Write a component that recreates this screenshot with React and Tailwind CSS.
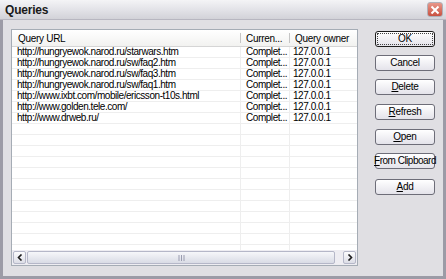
import React from 'react';

const rows = [
    'http://hungryewok.narod.ru/starwars.htm',
    'http://hungryewok.narod.ru/sw/faq2.htm',
    'http://hungryewok.narod.ru/sw/faq3.htm',
    'http://hungryewok.narod.ru/sw/faq1.htm',
    'http://www.ixbt.com/mobile/ericsson-t10s.html',
    'http://www.golden.tele.com/',
    'http://www.drweb.ru/',
];

const emptyRows = 12;

const Btn = ({ children, focus, className = '' }) => (
    <div
        className={`h-[16px] w-[60px] flex items-center justify-center rounded-[3px] border ${focus ? 'border-[#1c1c1c]' : 'border-[#6d6d78]'} bg-gradient-to-b from-white to-[#e4e3ea] text-[10px] tracking-[-0.3px] leading-none text-black whitespace-nowrap ${className}`}
    >
        {focus ? (
            <span className="w-[56px] h-[12px] flex items-center justify-center border border-dotted border-[#444]">{children}</span>
        ) : children}
    </div>
);

export default function App() {
    return (
        <div className="w-[446px] h-[279px] flex flex-col bg-[#e0dfe3] border-[3px] border-t-0 border-[#9c9ba6]" style={{ fontFamily: '"Liberation Sans", Arial, sans-serif' }}>
            {/* title bar */}
            <div className="h-[20px] flex items-center justify-between bg-gradient-to-b from-[#f4f4f6] via-[#e3e3e8] to-[#d2d2d8] border-b border-[#b7b6c0] -mx-[3px] pl-[5px] pr-[3px]">
                <span className="text-[12px] font-bold tracking-[-0.2px] text-[#1a1a1a]">Queries</span>
                <div className="w-[16px] h-[15px] rounded-[3px] bg-gradient-to-b from-[#e8978a] to-[#c85040] border border-[#b0b0b8] flex items-center justify-center">
                    <svg width="10" height="10" viewBox="0 0 10 10">
                        <path d="M1.5 1.5 L8.5 8.5 M8.5 1.5 L1.5 8.5" stroke="white" strokeWidth="2" />
                    </svg>
                </div>
            </div>

            <div className="flex pl-[8px] pt-[9px]">
                {/* list view */}
                <div className="w-[347px] h-[237px] border border-[#a5acb5] bg-white flex flex-col overflow-hidden">
                    <div className="h-[17px] flex items-stretch text-[10px] tracking-[-0.3px] text-black border-b border-[#d5d5d5] bg-gradient-to-b from-white to-[#f2f2f0] whitespace-nowrap">
                        <div className="w-[229px] flex items-center pl-[6px] border-r border-[#c5c5c5] my-[3px]">Query URL</div>
                        <div className="w-[49px] flex items-center pl-[5px] border-r border-[#c5c5c5] my-[3px]">Curren...</div>
                        <div className="flex-1 flex items-center pl-[5px] my-[3px]">Query owner</div>
                    </div>
                    <div className="flex-1 overflow-hidden">
                        {rows.map((url, i) => (
                            <div key={i} className="h-[11px] flex text-[10px] tracking-[-0.45px] leading-[10px] text-black border-b border-[#eeeeee]">
                                <div className="w-[229px] pl-[5px] border-r border-[#eeeeee] whitespace-nowrap overflow-hidden">{url}</div>
                                <div className="w-[49px] pl-[5px] border-r border-[#eeeeee] whitespace-nowrap overflow-hidden">Complet...</div>
                                <div className="flex-1 pl-[3px] whitespace-nowrap">127.0.0.1</div>
                            </div>
                        ))}
                        {Array.from({ length: emptyRows }).map((_, i) => (
                            <div key={`e${i}`} className="h-[11px] flex border-b border-[#eeeeee]">
                                <div className="w-[229px] border-r border-[#eeeeee]" />
                                <div className="w-[49px] border-r border-[#eeeeee]" />
                                <div className="flex-1" />
                            </div>
                        ))}
                    </div>
                    {/* horizontal scrollbar */}
                    <div className="h-[15px] flex items-center gap-[1px] px-[1px] bg-[#eeedf2]">
                        <div className="w-[13px] h-[13px] rounded-[2px] border border-[#b5b7c8] bg-gradient-to-b from-[#fcfcfd] to-[#dcdde6] flex items-center justify-center">
                            <svg width="6" height="7" viewBox="0 0 6 7"><path d="M4.5 0.5 L1.5 3.5 L4.5 6.5" stroke="#1e1e1e" strokeWidth="1.6" fill="none" /></svg>
                        </div>
                        <div className="w-[308px] h-[13px] rounded-[2px] border border-[#b5b7c8] bg-gradient-to-b from-[#f6f7fa] to-[#d9dbe5] flex items-center justify-center">
                            <svg width="7" height="6" viewBox="0 0 7 6"><path d="M1 0 V6 M3.5 0 V6 M6 0 V6" stroke="#9a9cb0" strokeWidth="1" /></svg>
                        </div>
                        <div className="flex-1" />
                        <div className="w-[13px] h-[13px] rounded-[2px] border border-[#b5b7c8] bg-gradient-to-b from-[#fcfcfd] to-[#dcdde6] flex items-center justify-center">
                            <svg width="6" height="7" viewBox="0 0 6 7"><path d="M1.5 0.5 L4.5 3.5 L1.5 6.5" stroke="#1e1e1e" strokeWidth="1.6" fill="none" /></svg>
                        </div>
                    </div>
                </div>

                {/* buttons */}
                <div className="ml-[17px] pt-[2px] flex flex-col">
                    <Btn focus>OK</Btn>
                    <Btn className="mt-[8px]">Cancel</Btn>
                    <Btn className="mt-[8px]"><span><u>D</u>elete</span></Btn>
                    <Btn className="mt-[9px]"><span><u>R</u>efresh</span></Btn>
                    <Btn className="mt-[9px]"><span><u>O</u>pen</span></Btn>
                    <Btn className="mt-[8px]"><span className="tracking-[-0.5px]"><u>F</u>rom Clipboard</span></Btn>
                    <Btn className="mt-[10px]"><span><u>A</u>dd</span></Btn>
                </div>
            </div>
        </div>
    );
}
